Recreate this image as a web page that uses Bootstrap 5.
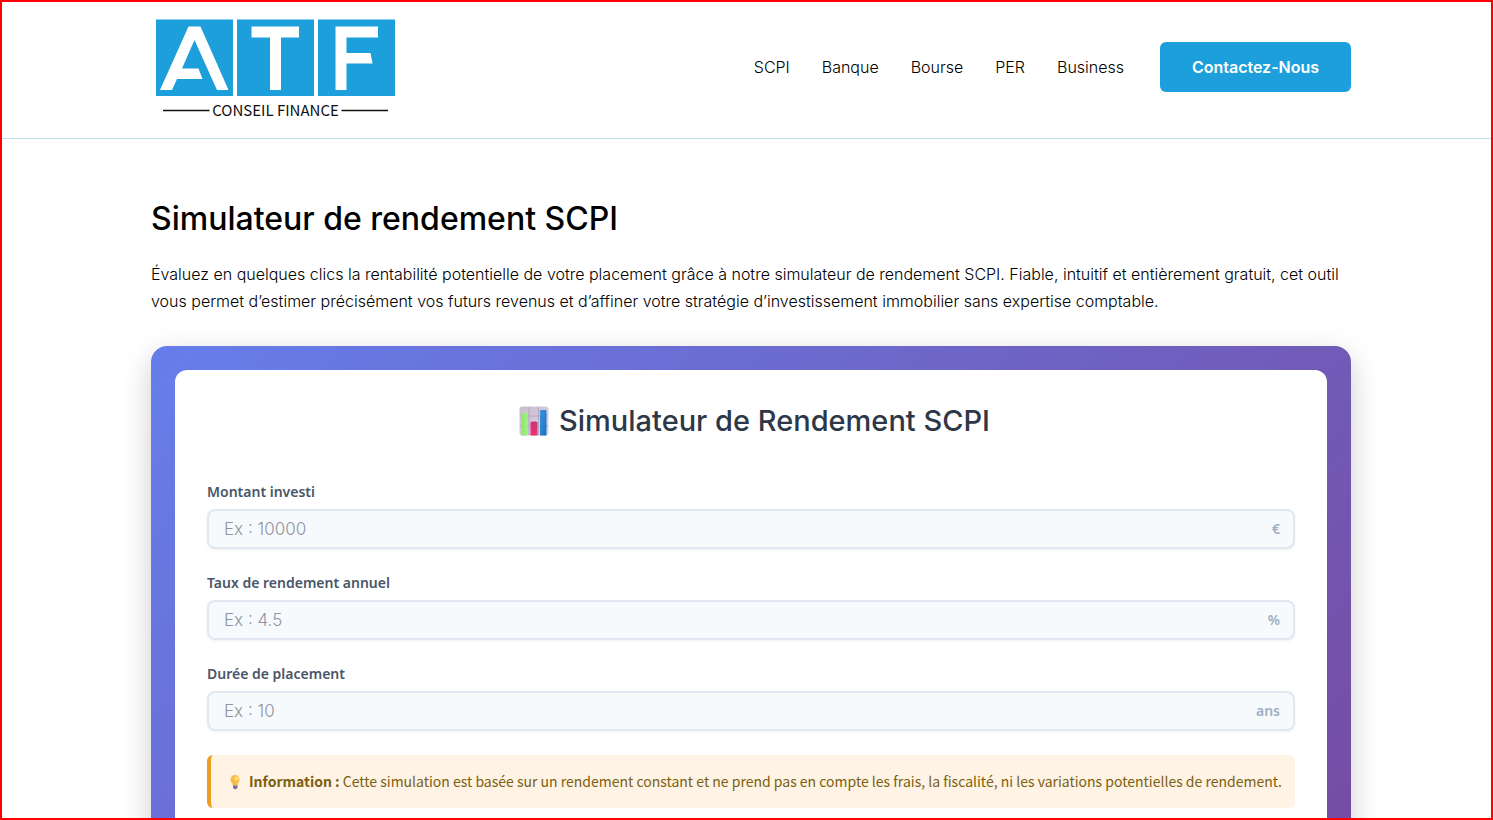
<!DOCTYPE html>
<html lang="fr">
<head>
<meta charset="utf-8">
<meta name="viewport" content="width=device-width, initial-scale=1">
<title>Simulateur de rendement SCPI</title>
<link href="https://cdn.jsdelivr.net/npm/bootstrap@5.3.0/dist/css/bootstrap.min.css" rel="stylesheet">
<style>
  body { font-family: Inter, "Liberation Sans", sans-serif; color: #000; background: #fff; }
  .page-frame { height: 100vh; border: 2px solid #f00; overflow: hidden; }
  .site-width { max-width: 1200px; }
  .site-header { border-bottom: 1px solid #bfe3ee; padding: 16px 0 22px 9px; }
  .site-main { padding: 58px 0 32px 9px; }
  .brand-logo { display: block; width: 248px; height: 98px; overflow: visible; }
  .site-nav { gap: 32px; font-size: 16px; }
  .site-nav a { color: #000; text-decoration: none; font-weight: 300; }
  .btn-contact { --bs-btn-bg: #1c9fda; --bs-btn-color: #fff; --bs-btn-hover-bg: #1788bb; --bs-btn-hover-color: #fff;
    font-weight: 600; font-size: 16px; height: 50px; width: 191px; border: 0; border-radius: 6px; margin-left: 4px; }
  h1 { font-size: 32px; line-height: 44px; font-weight: 500; margin-bottom: 20px; }
  .intro { font-size: 16px; line-height: 27px; font-weight: 300; margin-bottom: 31px; }
  .sim-shell { background: linear-gradient(135deg, #667eea, #764ba2); border-radius: 16px; padding: 24px; box-shadow: 0 10px 30px rgba(0,0,0,.2); }
  .sim-card { background: #fff; border-radius: 12px; padding: 32px; }
  h2 { font-size: 29px; line-height: 38px; font-weight: 500; color: #2d3748; gap: 10px; margin-bottom: 42px; padding-left: 7px; }
  .sim-field { margin-bottom: 24px; }
  .sim-field label { display: block; font: 600 14px/19px "Noto Sans", "Open Sans", sans-serif; color: #4a5568; margin-bottom: 8px; }
  .sim-field .form-control { height: 40px; border: 2px solid #e2e8f0; border-radius: 8px; background: #f7fafc; padding: 0 56px 0 15px; font-size: 17px; font-weight: 300; box-shadow: 0 1px 3px rgba(0,0,0,.06); }
  .sim-field .form-control::placeholder { color: #8f959f; }
  .unit { position: absolute; right: 15px; top: 0; line-height: 40px; font-family: "Noto Sans", "Open Sans", sans-serif; font-size: 14px; font-weight: 600; color: #a0aec0; }
  .info-note { background: #fef3e4; border-left: 4px solid #ed9d1f; border-radius: 6px; padding: 16px 12px 16px 17px; font: 14px/21px "Noto Sans CJK SC", "Noto Sans", sans-serif; color: #7c6011; gap: 7px; }
</style>
</head>
<body>
<div class="page-frame">
  <header class="site-header">
    <div class="site-width mx-auto d-flex align-items-center justify-content-between">
      <a href="#" aria-label="ATF Conseil Finance">
        <svg class="brand-logo" viewBox="0 0 248 98">
          <path fill="#1c9fda" d="M5 1.500h77V78H5zM86 1.500h77V78H86zM167 1.500h77V78h-77z"/>
          <path fill="#fff" d="M37.500 8.500H49.500L77.500 72H66L43.500 22 31 50.500h16.500L51.500 61H26L21 72H9zM100.500 8.500H148v11h-18V72h-11V19.500h-18.500zM184.500 8.500H227v11h-31.500V35h24l2 10.500h-26V72h-11z"/>
          <path stroke="#111" stroke-width="1.300" d="M12 92.500h46.500M190.500 92.500H237"/>
          <text x="124.500" y="97.500" text-anchor="middle" font-family="Noto Sans CJK SC, sans-serif" font-size="15" fill="#111">CONSEIL FINANCE</text>
        </svg>
      </a>
      <nav class="site-nav d-flex align-items-center">
        <a href="#">SCPI</a>
        <a href="#">Banque</a>
        <a href="#">Bourse</a>
        <a href="#">PER</a>
        <a href="#">Business</a>
        <button type="button" class="btn btn-contact">Contactez-Nous</button>
      </nav>
    </div>
  </header>
  <main class="site-main">
    <div class="site-width mx-auto">
    <h1>Simulateur de rendement SCPI</h1>
    <p class="intro">Évaluez en quelques clics la rentabilité potentielle de votre placement grâce à notre simulateur de rendement SCPI. Fiable, intuitif et entièrement gratuit, cet outil vous permet d’estimer précisément vos futurs revenus et d’affiner votre stratégie d’investissement immobilier sans expertise comptable.</p>
    <section class="sim-shell">
      <form class="sim-card">
        <h2 class="d-flex align-items-center justify-content-center">
          <svg width="30" height="30" viewBox="0 0 30 30" aria-hidden="true">
            <defs>
              <linearGradient id="paper" x2="1" y2="1"><stop stop-color="#c9bccf"/><stop offset="1" stop-color="#ddd6e6"/></linearGradient>
              <linearGradient id="green" x2="1"><stop stop-color="#8dea63"/><stop offset="1" stop-color="#a4ee83"/></linearGradient>
              <linearGradient id="pink" x2="0" y2="1"><stop stop-color="#c53a70"/><stop offset="1" stop-color="#ee2f72"/></linearGradient>
              <linearGradient id="blue" x2="1" y2="1"><stop stop-color="#3f92df"/><stop offset="1" stop-color="#1672c3"/></linearGradient>
            </defs>
            <rect x=".5" y=".5" width="29" height="29" rx="3" fill="url(#paper)"/>
            <path d="M10 1v28M19.500 1v28M1 10h28M1 20h28" stroke="#b3a7bd" fill="none"/>
            <path d="M2.500 8q0-1 1-1h4q1 0 1 1v21.500h-6z" fill="url(#green)"/>
            <path d="M11.500 17q0-1.500 1.500-1.500h4q1.500 0 1.500 1.500v12.500h-7z" fill="url(#pink)"/>
            <path d="M21 5q0-1 1-1h4.500q1 0 1 1v24.500H21z" fill="url(#blue)"/>
          </svg>
          <span>Simulateur de Rendement SCPI</span>
        </h2>
        <div class="sim-field">
          <label for="amount">Montant investi</label>
          <div class="position-relative">
            <input id="amount" type="text" inputmode="decimal" class="form-control" placeholder="Ex : 10000">
            <span class="unit">€</span>
          </div>
        </div>
        <div class="sim-field">
          <label for="rate">Taux de rendement annuel</label>
          <div class="position-relative">
            <input id="rate" type="text" inputmode="decimal" class="form-control" placeholder="Ex : 4.5">
            <span class="unit">%</span>
          </div>
        </div>
        <div class="sim-field">
          <label for="years">Durée de placement</label>
          <div class="position-relative">
            <input id="years" type="text" inputmode="numeric" class="form-control" placeholder="Ex : 10">
            <span class="unit">ans</span>
          </div>
        </div>
        <div class="info-note d-flex align-items-center">
          <svg class="flex-shrink-0" width="14" height="16" viewBox="0 0 14 16" aria-hidden="true">
            <path d="M5 10.500h4.500V14q-2.200 2.500-4.500 0z" fill="#8f6a9e"/>
            <path d="M7 1a4.500 4.500 0 0 1 4.500 4.500c0 2.500-2 3.500-2.200 6H4.800C4.500 9 2.500 8 2.500 5.500A4.500 4.500 0 0 1 7 1z" fill="#f8bd48"/>
            <circle cx="8.500" cy="4.500" r="2" fill="#ffdf83"/>
          </svg>
          <div><strong>Information :</strong> Cette simulation est basée sur un rendement constant et ne prend pas en compte les frais, la fiscalité, ni les variations potentielles de rendement.</div>
        </div>
      </form>
    </section>
    </div>
  </main>
</div>
<script src="https://cdn.jsdelivr.net/npm/bootstrap@5.3.0/dist/js/bootstrap.bundle.min.js"></script>
</body>
</html>
